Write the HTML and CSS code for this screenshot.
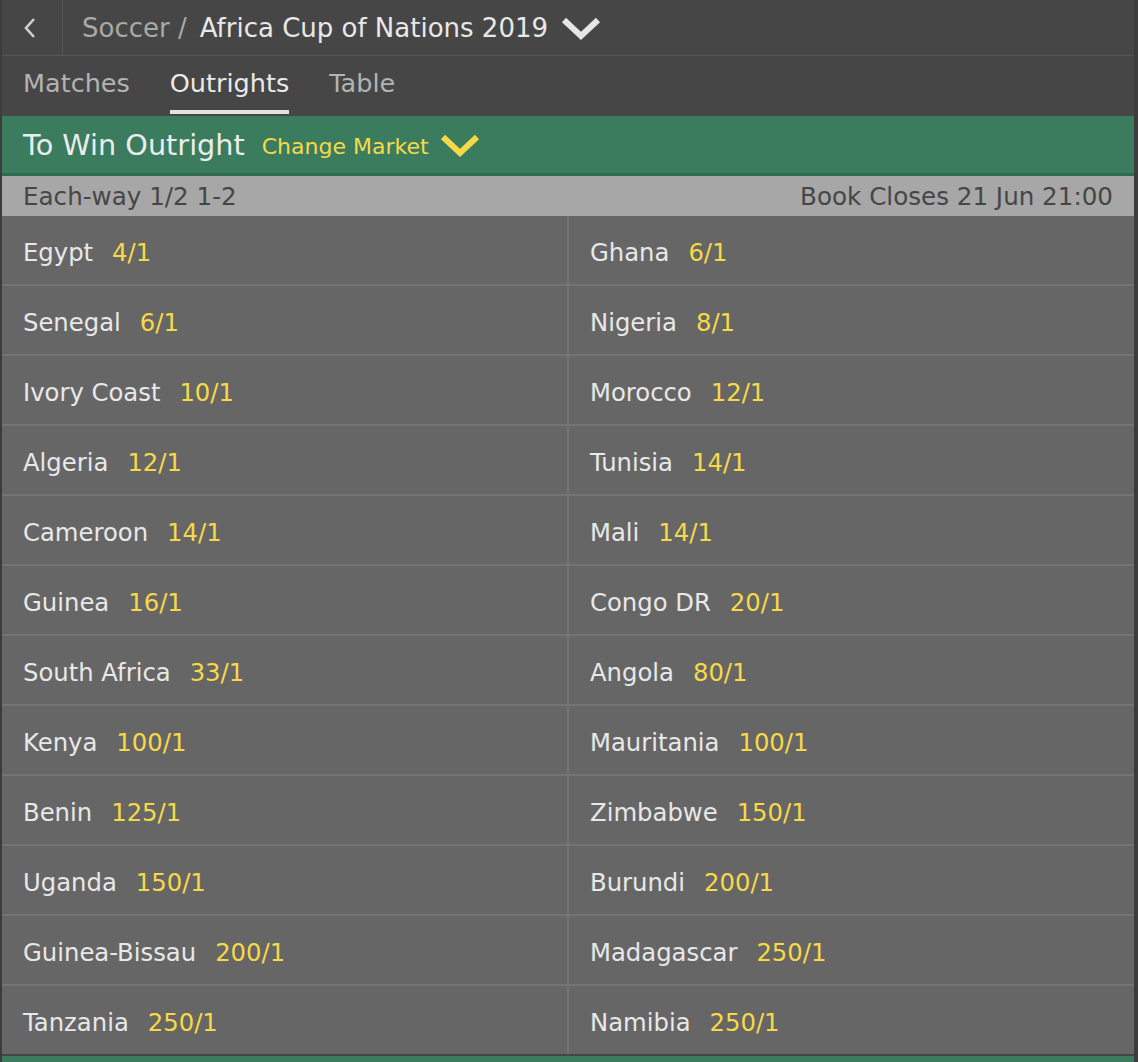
FILE: index.html
```html
<!DOCTYPE html>
<html>
<head>
    <title>Africa Cup of Nations 2019 - Outrights</title>
    <link rel="stylesheet" href="styles.css">
</head>
<body>
    <div id="page">
        <div class="topbar">
            <div class="back">
                <svg width="14" height="22" viewBox="0 0 14 22"><path d="M11 2 L3 11 L11 20" fill="none" stroke="#cfcfcf" stroke-width="2.6"/></svg>
            </div>
            <div class="crumbs">
                <span class="crumb-parent">Soccer /</span>
                <span class="crumb-title">Africa Cup of Nations 2019</span>
                <svg class="chev" width="40" height="24" viewBox="0 0 40 24"><path d="M3 3 L20 19 L37 3" fill="none" stroke="#e6e6e6" stroke-width="6"/></svg>
            </div>
        </div>

        <div class="tabs">
            <div class="tab">Matches</div>
            <div class="tab active">Outrights</div>
            <div class="tab">Table</div>
        </div>

        <div class="market-head">
            <span class="market-title">To Win Outright</span>
            <span class="change">Change Market</span>
            <svg class="chev" width="40" height="24" viewBox="0 0 40 24"><path d="M3 3 L20 19 L37 3" fill="none" stroke="#f7d948" stroke-width="6"/></svg>
        </div>

        <div class="terms">
            <span>Each-way 1/2 1-2</span>
            <span>Book Closes 21 Jun 21:00</span>
        </div>

        <div class="grid">
            <div class="cell">Egypt<span class="odds">4/1</span></div>
            <div class="cell">Ghana<span class="odds">6/1</span></div>
            <div class="cell">Senegal<span class="odds">6/1</span></div>
            <div class="cell">Nigeria<span class="odds">8/1</span></div>
            <div class="cell">Ivory Coast<span class="odds">10/1</span></div>
            <div class="cell">Morocco<span class="odds">12/1</span></div>
            <div class="cell">Algeria<span class="odds">12/1</span></div>
            <div class="cell">Tunisia<span class="odds">14/1</span></div>
            <div class="cell">Cameroon<span class="odds">14/1</span></div>
            <div class="cell">Mali<span class="odds">14/1</span></div>
            <div class="cell">Guinea<span class="odds">16/1</span></div>
            <div class="cell">Congo DR<span class="odds">20/1</span></div>
            <div class="cell">South Africa<span class="odds">33/1</span></div>
            <div class="cell">Angola<span class="odds">80/1</span></div>
            <div class="cell">Kenya<span class="odds">100/1</span></div>
            <div class="cell">Mauritania<span class="odds">100/1</span></div>
            <div class="cell">Benin<span class="odds">125/1</span></div>
            <div class="cell">Zimbabwe<span class="odds">150/1</span></div>
            <div class="cell">Uganda<span class="odds">150/1</span></div>
            <div class="cell">Burundi<span class="odds">200/1</span></div>
            <div class="cell">Guinea-Bissau<span class="odds">200/1</span></div>
            <div class="cell">Madagascar<span class="odds">250/1</span></div>
            <div class="cell">Tanzania<span class="odds">250/1</span></div>
            <div class="cell">Namibia<span class="odds">250/1</span></div>
        </div>

        <div class="next-market"></div>
    </div>
</body>
</html>
```

FILE: styles.css
```css
body {
    margin: 0;
    background-color: #3c3c3c;
    font-family: "DejaVu Sans", Verdana, sans-serif;
    color: #e8e8e8;
}

#page {
    margin: 0 4px 0 2px;
    background-color: #464646;
}

.topbar {
    height: 55px;
    display: flex;
    align-items: center;
    border-bottom: 1px solid #555;
}

.back {
    width: 61px;
    height: 55px;
    display: flex;
    align-items: center;
    padding-left: 21px;
    box-sizing: border-box;
    border-right: 1px solid #555;
}

.crumbs {
    display: flex;
    align-items: center;
    padding-left: 19px;
    font-size: 26px;
}

.crumb-parent {
    color: #a9a9a9;
    margin-right: 13px;
}

.crumb-title {
    color: #e8e8e8;
}

.crumbs .chev {
    margin-left: 13px;
    margin-top: 2px;
}

.tabs {
    height: 60px;
    display: flex;
    padding-left: 21px;
    gap: 40px;
    font-size: 25.5px;
}

.tab {
    color: #b3b3b3;
    display: flex;
    align-items: center;
    box-sizing: border-box;
    height: 58px;
    border-bottom: 4px solid transparent;
}

.tab.active {
    color: #eaeaea;
    border-bottom-color: #e2e2e2;
}

.market-head {
    height: 57px;
    display: flex;
    align-items: center;
    padding-left: 21px;
    background-color: #3b7c5f;
    border-bottom: 3px solid #2f6a50;
}

.market-title {
    font-size: 28.7px;
    color: #ececec;
    margin-right: 17px;
}

.change {
    font-size: 22px;
    color: #f7d948;
    margin-top: 4px;
    margin-right: 11px;
}

.market-head .chev {
    margin-top: 2px;
}

.terms {
    height: 40px;
    display: flex;
    align-items: center;
    justify-content: space-between;
    padding: 0 21px;
    background-color: #a7a7a7;
    color: #464646;
    font-size: 24.6px;
}

.grid {
    display: grid;
    grid-template-columns: 1fr 1fr;
    gap: 2px;
    background-color: #747474;
}

.cell {
    height: 68px;
    display: flex;
    align-items: center;
    padding-left: 21px;
    padding-top: 4px;
    box-sizing: border-box;
    background-color: #666;
    font-size: 24.3px;
    color: #e8e8e8;
}

.odds {
    color: #f7d948;
    margin-left: 19px;
}

.next-market {
    height: 6px;
    margin-top: 2px;
    background-color: #3b7c5f;
}
```
